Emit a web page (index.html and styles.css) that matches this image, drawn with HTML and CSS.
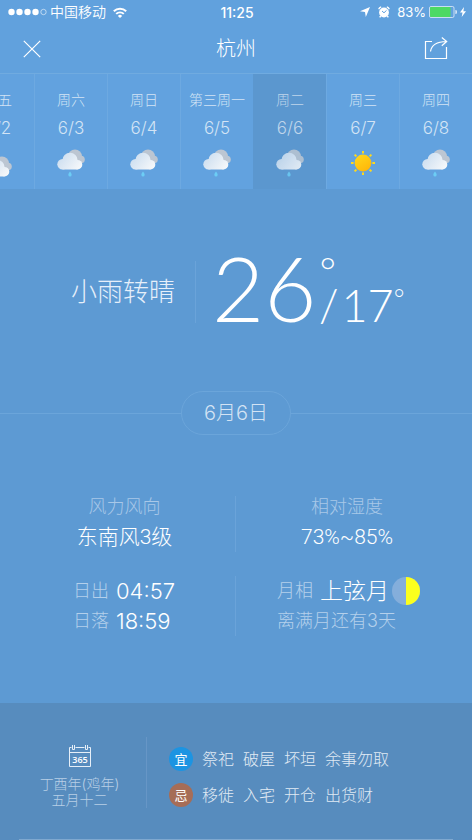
FILE: index.html
```html
<!DOCTYPE html>
<html lang="zh-CN">
<head>
<meta charset="utf-8">
<meta name="viewport" content="width=device-width, initial-scale=1">
<title>杭州</title>
<link rel="stylesheet" href="styles.css">
</head>
<body>
<svg class="defs" width="0" height="0" aria-hidden="true">
  <defs>
    <linearGradient id="cloud-front" gradientUnits="userSpaceOnUse" x1="2" y1="5" x2="22" y2="21">
      <stop offset="0" stop-color="#c9dcef"/><stop offset="1" stop-color="#f6f8fa"/>
    </linearGradient>
    <linearGradient id="sun-face" x1="0" y1="0" x2="0.6" y2="1">
      <stop offset="0" stop-color="#ffd91c"/><stop offset="1" stop-color="#ffb80a"/>
    </linearGradient>
    <g id="cloud">
      <g fill="#bcc6d2"><circle cx="18" cy="7.500" r="7"/><circle cx="24" cy="10.500" r="3.800"/></g>
      <g fill="url(#cloud-front)"><circle cx="5.500" cy="15.300" r="5.200"/><circle cx="13" cy="11.500" r="7.700"/><circle cx="20.500" cy="15.700" r="4.800"/><rect x="5.500" y="13" width="15" height="7.500"/></g>
    </g>
    <symbol id="rain" viewBox="0 0 28 30">
      <use href="#cloud"/>
      <path fill="#6ccdf5" d="M13 22.500C14.500 24.500 14.800 25.200 14.600 26A1.600 1.600 0 0 1 11.400 26C11.200 25.200 11.500 24.500 13 22.500Z"/>
    </symbol>
    <symbol id="cloudy" viewBox="0 0 28 30">
      <g transform="translate(0 7)"><circle cx="14" cy="5" r="4.500" fill="#f3cf6a"/><use href="#cloud"/></g>
    </symbol>
    <symbol id="sun" viewBox="0 0 28 30">
      <circle cx="14" cy="14" r="8.400" fill="url(#sun-face)"/>
      <g stroke="#ffd91c" stroke-width="2">
        <path d="M14 2v2.600M14 23.400v2.600M2 14h2.600M23.400 14h2.600M5.600 5.600l1.800 1.800M20.600 20.600l1.800 1.800M5.600 22.400l1.800-1.800M20.600 7.400l1.800-1.800"/>
      </g>
    </symbol>
  </defs>
</svg>

<div class="status">
  <div class="status-side">
    <svg width="39" height="8" viewBox="0 0 39 8" aria-hidden="true">
      <g fill="#fff"><circle cx="3.500" cy="4" r="3.200"/><circle cx="11.500" cy="4" r="3.200"/><circle cx="19.500" cy="4" r="3.200"/><circle cx="27.500" cy="4" r="3.200"/></g>
      <circle cx="35.500" cy="4" r="2.700" fill="none" stroke="#fff" stroke-opacity=".7" stroke-width=".8"/>
    </svg>
    <span class="carrier">中国移动</span>
    <svg class="wifi" width="14" height="11" viewBox="0 0 14 11" fill="none" stroke="#fff" stroke-width="2" aria-hidden="true">
      <path d="M.8 4.200a8.900 8.900 0 0 1 12.400 0M3.200 6.900a5.500 5.500 0 0 1 7.600 0"/>
      <path fill="#fff" stroke="none" d="M7 11L4.900 8.900a3 3 0 0 1 4.200 0Z"/>
    </svg>
  </div>
  <time class="clock">11:25</time>
  <div class="status-side status-right">
    <svg width="10" height="10" viewBox="0 0 10 10" fill="#fff" aria-hidden="true"><path d="M10 0L5.800 10L5 5L0 4.300Z"/></svg>
    <svg class="alarm" width="12" height="12" viewBox="0 0 12 12" aria-hidden="true">
      <circle cx="6" cy="6.500" r="4.900" fill="#fff"/>
      <path d="M.7 3.200A4 4 0 0 1 3.200 .8M8.800 .8A4 4 0 0 1 11.300 3.200M2.700 10l-1 1.400M9.300 10l1 1.400" stroke="#fff" stroke-width="1.400" fill="none"/>
      <path d="M4 5l2 1.800L8.500 4.400" stroke="#609fdc" fill="none"/>
    </svg>
    <span class="percent">83%</span>
    <svg width="28" height="12" viewBox="0 0 28 12" aria-hidden="true">
      <rect x=".5" y=".5" width="24.500" height="11" rx="1.500" fill="none" stroke="#fff" stroke-opacity=".65"/>
      <rect x="1" y="1" width="20.500" height="10" rx="1" fill="#4cd964"/>
      <path d="M26.300 4a2 2 0 0 1 0 4Z" fill="#fff" fill-opacity=".7"/>
    </svg>
    <svg width="6" height="10" viewBox="0 0 6 10" fill="#fff" aria-hidden="true"><path d="M4 0L0 5.500h2.500L1.700 10L6 4.200H3.400Z"/></svg>
  </div>
</div>

<header class="bar">
  <button class="icon-button" type="button" aria-label="关闭">
    <svg width="18" height="18" viewBox="0 0 18 18" fill="none" stroke="#fff" stroke-width="1.200"><path d="M.8 .8l16.400 16.400M17.200 .8L.8 17.200"/></svg>
  </button>
  <h1 class="city">杭州</h1>
  <button class="icon-button share" type="button" aria-label="分享">
    <svg width="24" height="24" viewBox="0 0 24 24" fill="none" stroke="#fff" stroke-width="1.200"><path d="M8 4.500H1.500V21.500H22.500V10M6.500 14.500C7.500 7.500 13 4.600 22.500 4.500M17.800 .5l4.900 4l-4.900 4.300"/></svg>
  </button>
</header>

<nav class="days" aria-label="日期">
  <button class="day" type="button"><span class="week">周五</span><span class="date">6/2</span><svg class="sky"><use href="#cloudy"/></svg></button>
  <button class="day" type="button"><span class="week">周六</span><span class="date">6/3</span><svg class="sky"><use href="#rain"/></svg></button>
  <button class="day" type="button"><span class="week">周日</span><span class="date">6/4</span><svg class="sky"><use href="#rain"/></svg></button>
  <button class="day" type="button"><span class="week">第三周一</span><span class="date">6/5</span><svg class="sky"><use href="#rain"/></svg></button>
  <button class="day current" type="button" aria-current="date"><span class="week">周二</span><span class="date">6/6</span><svg class="sky"><use href="#rain"/></svg></button>
  <button class="day" type="button"><span class="week">周三</span><span class="date">6/7</span><svg class="sky"><use href="#sun"/></svg></button>
  <button class="day" type="button"><span class="week">周四</span><span class="date">6/8</span><svg class="sky"><use href="#rain"/></svg></button>
</nav>

<main class="main">
  <section class="summary">
    <p class="condition">小雨转晴</p>
    <p class="temps"><span class="high">26</span><span class="high-ring">°</span><span class="low">/</span><span class="low">17</span><span class="low-ring">°</span></p>
  </section>

  <div class="divider"><span class="pill">6月6日</span></div>

  <section class="details">
    <div class="detail split">
      <p class="label">风力风向</p>
      <p class="value">东南风3级</p>
    </div>
    <div class="detail">
      <p class="label">相对湿度</p>
      <p class="value">73%~85%</p>
    </div>
    <div class="detail split sun">
      <p class="row"><span class="tag">日出</span><span class="time">04:57</span></p>
      <p class="row"><span class="tag">日落</span><span class="time">18:59</span></p>
    </div>
    <div class="detail moon">
      <p class="row"><span class="tag">月相</span><span class="phase">上弦月</span>
        <svg class="disc" width="28" height="28" viewBox="0 0 28 28" aria-hidden="true"><circle cx="14" cy="14" r="14" fill="#84aedb"/><path d="M14 0a14 14 0 0 1 0 28Z" fill="#fbff1e"/></svg>
      </p>
      <p class="row tag">离满月还有3天</p>
    </div>
  </section>
</main>

<footer class="almanac">
  <div class="almanac-body">
    <div class="lunar">
      <svg width="24" height="24" viewBox="0 0 24 24" role="img" aria-label="365">
        <g fill="none" stroke="#e6eff8"><path d="M3.500 3.500H1.500V22.500H22.500V3.500H20.500M7.500 3.500H16.500M1.500 8.500H22.500"/><path d="M4.500 1v4.500h2V1M17.500 1v4.500h2V1"/></g>
        <text class="icon-text" x="12" y="19" text-anchor="middle">365</text>
      </svg>
      <p>丁酉年(鸡年)</p>
      <p>五月十二</p>
    </div>
    <dl class="advice">
      <div class="advice-row"><dt class="badge good">宜</dt><dd>祭祀</dd><dd>破屋</dd><dd>坏垣</dd><dd>余事勿取</dd></div>
      <div class="advice-row"><dt class="badge bad">忌</dt><dd>移徙</dd><dd>入宅</dd><dd>开仓</dd><dd>出货财</dd></div>
    </dl>
  </div>
</footer>
</body>
</html>
```

FILE: styles.css
```css
* { box-sizing: border-box; margin: 0; padding: 0; }

body {
  min-height: 100vh;
  display: flex;
  flex-direction: column;
  overflow-x: hidden;
  background: #5d9ad3;
  color: #fff;
  font-family: Inter, "Noto Sans CJK SC", sans-serif;
  font-weight: 300;
}

svg { display: block; flex: none; }
.defs { position: absolute; }

button {
  border: 0;
  background: none;
  color: inherit;
  font: inherit;
  cursor: pointer;
}

/* Status bar */
.status {
  display: grid;
  grid-template-columns: 1fr auto 1fr;
  align-items: center;
  height: 24px;
  padding: 0 6px 0 8px;
  background: #61a1dd;
}
.status-side { display: flex; align-items: center; gap: 3px; }
.status-right { justify-content: flex-end; }
.carrier { font-size: 14px; line-height: 24px; font-weight: 350; }
.wifi { margin-left: 4px; }
.clock { font-size: 14px; font-weight: 500; }
.alarm { margin: 0 4px 0 5px; }
.percent { font-size: 13px; font-weight: 400; }

/* Title bar */
.bar {
  display: grid;
  grid-template-columns: 64px 1fr 64px;
  align-items: center;
  height: 49px;
  background: #61a1dd;
}
.icon-button { display: grid; place-items: center; height: 49px; }
.share { padding-right: 8px; }
.city { font-size: 20px; line-height: 28px; font-weight: 300; text-align: center; }

/* Day strip */
.days {
  display: flex;
  justify-content: flex-end;
  overflow: hidden;
  border-top: 1px solid #70abe0;
}
.day {
  display: flex;
  flex: 1 0 73px;
  flex-direction: column;
  align-items: center;
  height: 115px;
  padding-top: 16px;
  border-left: 1px solid #6da9e1;
  background: #62a2df;
  color: #d3e4f5;
}
.current { background: #5b97cf; border-color: #5b97cf; color: #bfd5eb; }
.current .sky { opacity: .85; }
.week { font-size: 14px; line-height: 20px; white-space: nowrap; }
.date { margin-top: 8px; font-size: 17px; line-height: 20px; }
.sky { width: 28px; height: 30px; margin-top: 11px; }

/* Current weather */
.main { flex: 1; padding-top: 58px; }
.summary {
  display: grid;
  grid-template-columns: 196px 1fr;
  align-items: end;
}
.condition {
  margin-bottom: 5px;
  padding-right: 20px;
  border-right: 1px solid #6aa3d9;
  font-size: 26px;
  line-height: 62px;
  text-align: right;
  color: #e6effa;
}
.temps {
  display: flex;
  align-items: baseline;
  gap: 3px;
  padding-left: 16px;
  font-family: Lato, sans-serif;
}
.high { font-size: 90px; line-height: 80px; }
.low { font-size: 45px; line-height: 45px; }
.high-ring {
  align-self: flex-start;
  margin-right: -20px;
  font-size: 40px;
  line-height: 48px;
}
.low-ring {
  align-self: flex-start;
  margin: 36px 0 0 -3px;
  font-size: 26px;
  line-height: 30px;
}

.divider {
  display: flex;
  align-items: center;
  margin-top: 63px;
}
.divider::before, .divider::after { content: ""; flex: 1; height: 1px; background: #6ba5da; }
.pill {
  padding: 0 22px;
  border: 1px solid #6ba5da;
  border-radius: 22px;
  font-size: 20px;
  line-height: 42px;
  color: #d3e3f4;
}

.details {
  display: grid;
  grid-template-columns: 1fr 1fr;
  row-gap: 24px;
  margin-top: 61px;
}
.detail {
  padding-right: 14px;
  text-align: center;
}
.split { padding: 0 0 0 14px; border-right: 1px solid #6aa3d9; }
.label { font-size: 18px; line-height: 22px; color: #a8c8e8; }
.value {
  margin-top: 4px;
  font-family: Roboto, "Noto Sans CJK SC", sans-serif;
  font-size: 21px;
  line-height: 30px;
}
.sun { padding-left: 73px; }
.moon { padding: 0 0 0 41px; }
.row { display: flex; align-items: center; gap: 7px; line-height: 30px; }
.tag { font-size: 18px; color: #b4d0eb; }
.time { font-size: 22px; }
.phase { font-size: 23px; }
.disc { margin-left: -4px; }

/* Almanac */
.almanac { padding: 34px 19px 0; background: #578cbe; }
.almanac-body {
  display: grid;
  grid-template-columns: 128px 1fr;
  align-items: start;
  padding-bottom: 26px;
  border-bottom: 1px solid #7fa8cf;
}
.lunar {
  display: flex;
  flex-direction: column;
  align-items: center;
  padding: 7px 6px 0 0;
  border-right: 1px solid #6796c6;
  font-size: 14px;
  line-height: 16px;
  color: #b7cfe6;
}
.lunar svg { margin-bottom: 8px; }
.icon-text { fill: #fff; font: 600 9px "Open Sans", sans-serif; }
.advice { padding: 4px 0 0 22px; }
.advice-row { display: flex; align-items: center; gap: 9px; height: 36px; }
.advice dd { font-size: 16px; line-height: 24px; color: #e0eaf4; }
.badge {
  width: 24px;
  border-radius: 50%;
  font-size: 13px;
  line-height: 24px;
  font-weight: 400;
  text-align: center;
}
.good { background: #1c94e2; }
.bad { background: #a66d57; }
```
